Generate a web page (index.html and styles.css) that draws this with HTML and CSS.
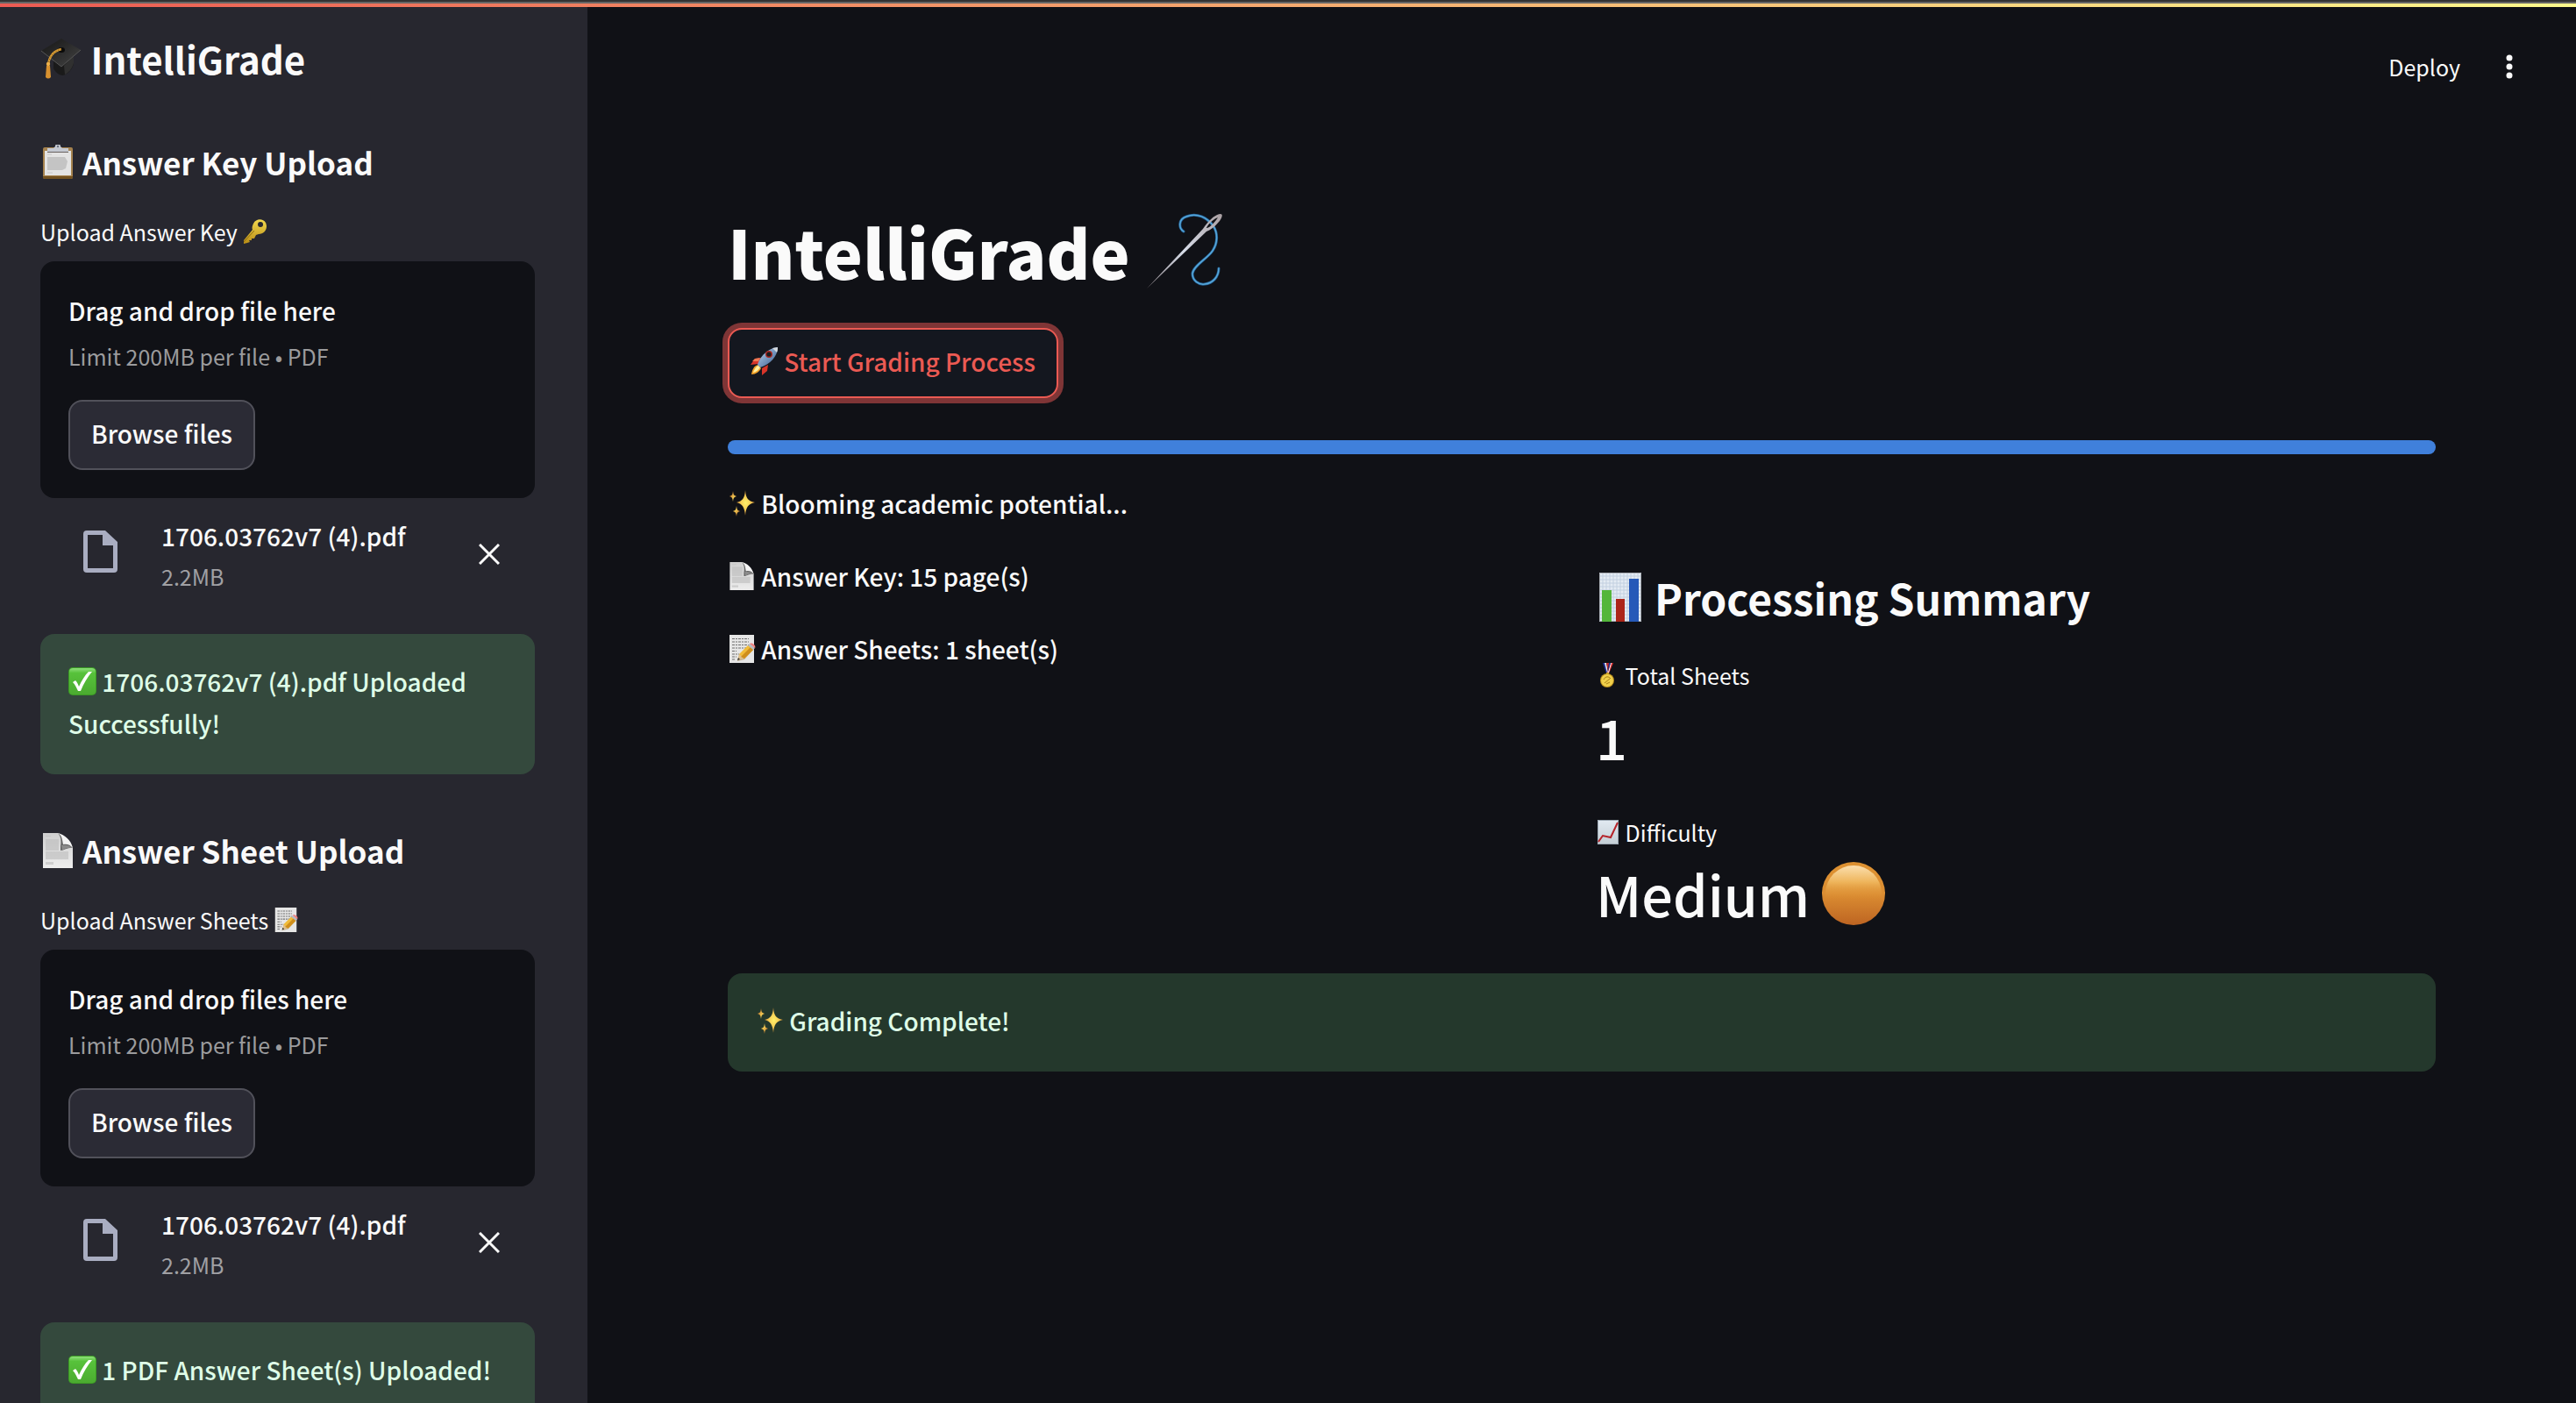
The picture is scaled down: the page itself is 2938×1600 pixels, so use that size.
FILE: index.html
```html
<!DOCTYPE html>
<html lang="en">
<head>
<meta charset="utf-8">
<meta name="viewport" content="width=device-width, initial-scale=1">
<title>IntelliGrade</title>
<link rel="stylesheet" href="styles.css">
</head>
<body>
<svg class="sprite" aria-hidden="true">
  <defs>
    <linearGradient id="g-orange" x1="0" y1="0" x2="0" y2="1"><stop offset="0" stop-color="#dd9131"/><stop offset=".5" stop-color="#dc8e32"/><stop offset="1" stop-color="#bd6422"/></linearGradient>
    <linearGradient id="g-shine" x1="0" y1="0" x2="0" y2="1"><stop offset="0" stop-color="#fbdfae"/><stop offset=".3" stop-color="#eeb45a"/><stop offset=".6" stop-color="#dc8e32" stop-opacity="0"/></linearGradient>
    <linearGradient id="g-paper" x1="0" y1="0" x2="0" y2="1"><stop offset="0" stop-color="#cfcfcf"/><stop offset="1" stop-color="#ededed"/></linearGradient>
    <linearGradient id="g-chart" x1="0" y1="0" x2="0" y2="1"><stop offset="0" stop-color="#e2eaf2"/><stop offset="1" stop-color="#c3ced4"/></linearGradient>
    <linearGradient id="g-check" x1="0" y1="0" x2="0" y2="1"><stop offset="0" stop-color="#8fe07c"/><stop offset=".18" stop-color="#57c23b"/><stop offset="1" stop-color="#4bab30"/></linearGradient>
    <linearGradient id="g-key" x1="0" y1="0" x2="0" y2="1"><stop offset="0" stop-color="#f2d84e"/><stop offset="1" stop-color="#b98d16"/></linearGradient>
    <linearGradient id="g-cap" x1="0" y1="0" x2="1" y2="1"><stop offset="0" stop-color="#151515"/><stop offset="1" stop-color="#444"/></linearGradient>
    <linearGradient id="g-rocket" x1="0" y1="0" x2="1" y2="1"><stop offset="0" stop-color="#c7dcf2"/><stop offset=".5" stop-color="#7898c0"/><stop offset="1" stop-color="#3c5a8c"/></linearGradient>
    <linearGradient id="g-needle" x1="0" y1="1" x2="1" y2="0"><stop offset="0" stop-color="#8d8488"/><stop offset=".5" stop-color="#d6dce8"/><stop offset="1" stop-color="#a99fa2"/></linearGradient>
    <radialGradient id="g-star"><stop offset="0" stop-color="#fff06a"/><stop offset=".5" stop-color="#f7cf55"/><stop offset="1" stop-color="#c98936"/></radialGradient>
  </defs>

  <symbol id="e-cap" viewBox="0 0 48 48">
    <path d="M15 22v13c2 5 8 8 10 8s10-3 13-13V20z" fill="#1a1a1a"/>
    <path d="M27 32l11-12v9c-2 7-6 11-10 13z" fill="#303030"/>
    <path d="M1 15L24 1l22 13-22 19z" fill="url(#g-cap)"/>
    <path d="M1 15l23 18 22-19" fill="none" stroke="#555" stroke-width="1"/>
    <ellipse cx="24" cy="14" rx="4" ry="3" fill="#0a0a0a"/>
    <path d="M24 13C16 15 10 21 9 31" fill="none" stroke="#d79c34" stroke-width="2.4"/>
    <path d="M24 13C16 15 10 21 9 31" fill="none" stroke="#7d551a" stroke-width="1" stroke-dasharray="1 2"/>
    <path d="M7 32h4l1 13c-2 2-4 2-6 0z" fill="#d8912f"/><circle cx="9" cy="30" r="2.2" fill="#efb14a"/>
  </symbol>
  <symbol id="e-clip" viewBox="0 0 40 40">
    <rect x="3" y="3" width="34" height="36" rx="2" fill="#a5824e"/><path d="M3 36h34v1a2 2 0 0 1-2 2H5a2 2 0 0 1-2-2z" fill="#73511f"/>
    <path d="M5 7h30v28H5z" fill="#e3e3e3"/><path d="M8 14h20l3 5-2 8-4 2H8z" fill="#c4c4c4"/><path d="M8 11h5M8 32h6" stroke="#c8c8c8"/>
    <path d="M8 4h7l2-2a3 3 0 0 1 6 0l2 2h7v5H8z" fill="#c5c9d2"/><path d="M8 8h24v1H8z" fill="#696260"/><circle cx="20" cy="2" r="1.2" fill="#6a7182"/>
  </symbol>
  <symbol id="e-page" viewBox="0 0 40 40">
    <path d="M3 0h18l16 17v23H3z" fill="url(#g-paper)"/>
    <path d="M6 7h15v13H6zM6 21h26v9H6zM6 33h9v3H6zM6 3h6v1H6z" fill="#bdbdbd" opacity=".6"/>
    <path d="M20 0c4 4 4 11 3 15v5c3 0 10-4 14-3C35 10 28 2 20 0z" fill="#646464"/>
    <path d="M20 0c5 3 5 8 6 13 4-1 8 0 11 4C35 8 28 2 20 0z" fill="#f4f4f4"/>
    <path d="M24 14c5-1 9 0 13 3-4-1-9 0-12 3z" fill="#8b8b8b"/>
  </symbol>
  <symbol id="e-memo" viewBox="0 0 32 32">
    <path d="M2 0h28v32H2z" fill="#e6e6e6"/>
    <path d="M5 4.500h19M5 8h19M5 11.500h19M5 15h16M5 18.500h5M5 22h8M5 25h5M5 28h4" stroke="#6f6f6f" stroke-width="1.200" stroke-dasharray="3 1 2 1"/>
    <path d="M11 30l2-7L25 11l6 4-12 13z" fill="#8e6a2c" opacity=".45"/>
    <path d="M11 29l2-7 3 1 3 4z" fill="#dfc08b"/><path d="M11 29l1-3 2 2z" fill="#333"/>
    <path d="M13 22L23 12l6 5-10 10z" fill="#f1bc3a"/><path d="M15 25l11-11 3 3-10 10z" fill="#cf8e1c"/>
    <path d="M23 12l2-2 6 5-2 2z" fill="#b9bcc2"/><path d="M25 10c2-2 8 2 6 5z" fill="#ef8080"/>
  </symbol>
  <symbol id="e-key" viewBox="0 0 28 28">
    <path fill-rule="evenodd" d="M13 5c3-6 11-6 14-1 3 6-1 13-8 13l-3 1-2 4-3 0 0 2-3 0 1 2-3 1-4 1v-4L12 12c-1-2 0-5 1-7zM21 3a3 3 0 1 0 .1 6A3 3 0 0 0 21 3z" fill="url(#g-key)"/>
    <path d="M2 26L14 13" stroke="#8a6a10" stroke-width="1"/>
  </symbol>
  <symbol id="e-check" viewBox="0 0 32 32">
    <rect width="32" height="32" rx="5" fill="#3b9a24"/><rect x="1" y="1" width="30" height="30" rx="4" fill="url(#g-check)"/>
    <path d="M5 17l3-2c2 2 3 4 4 7C15 15 19 9 23 5l4 0C22 11 17 19 14 27h-3C9 23 8 20 5 17z" fill="#fff"/>
  </symbol>
  <symbol id="e-rocket" viewBox="0 0 32 32">
    <path d="M13 12L5 13l-5 7 9-1zM20 20l-1 7-6 5 0-8z" fill="#d8352a"/><path d="M11 12l-6 1-3 3 7 0z" fill="#ef7a55"/>
    <path d="M9 20c-5 1-7 5-8 11 5 0 9-3 11-7z" fill="#f4a32a"/><path d="M9 21c-3 1-5 5-6 8 4-1 6-3 8-6z" fill="#fff2a0"/>
    <path d="M8 20c2-8 11-19 23-20 0 10-9 20-20 23z" fill="url(#g-rocket)"/>
    <path d="M25 1l6-1c0 2 0 4-1 6z" fill="#d5d9df"/><circle cx="21" cy="8" r="4" fill="#aa2620"/><circle cx="21" cy="8" r="2.600" fill="#1b1b1f"/>
  </symbol>
  <symbol id="e-needle" viewBox="0 0 88 88">
    <path d="M44 22C38 18 38 8 47 5c12-5 24 1 31 11 5 8 5 19-1 28-6 9-22 17-23 26 0 8 7 13 14 12 9-1 16-8 16-18" fill="none" stroke="#26649a" stroke-width="3" stroke-linecap="round"/>
    <path d="M44 22C38 18 38 8 47 5c12-5 24 1 31 11 5 8 5 19-1 28-6 9-22 17-23 26 0 8 7 13 14 12 9-1 16-8 16-18" fill="none" stroke="#56a7d8" stroke-width="1.500" stroke-linecap="round"/>
    <path fill-rule="evenodd" d="M2 87L66 19C71 11 80 2 86 2c3 0 2 4-1 8-5 6-10 10-15 12zM70 18c4 0 10-7 13-12-5 2-11 7-13 12z" fill="url(#g-needle)"/>
  </symbol>
  <symbol id="e-spark" viewBox="0 0 32 32">
    <path d="M20 1c1 10 3 12 11 14-8 2-10 5-11 15-1-10-3-13-10-15 7-2 9-4 10-14z" fill="url(#g-star)"/>
    <path d="M6 2c.5 4 1 5 4 6-3 1-3.500 2-4 6-.5-4-1-5-4-6 3-1 3.500-2 4-6zM10 19c.5 4 1 5 4 6-3 1-3.500 2-4 6-.5-4-1-5-4-6 3-1 3.500-2 4-6z" fill="url(#g-star)"/>
  </symbol>
  <symbol id="e-bars" viewBox="0 0 56 56">
    <path d="M4 0h48v56H4z" fill="#e4ebf3"/>
    <path d="M4 4h48M4 8h48M4 12h48M4 16h48M4 20h48M4 24h48M4 28h48M4 32h48M4 36h48M4 40h48M4 44h48M4 48h48M4 52h48M8 0v56M12 0v56M16 0v56M20 0v56M24 0v56M28 0v56M32 0v56M36 0v56M40 0v56M44 0v56M48 0v56" stroke="#c2d0e0" stroke-width="1" fill="none"/>
    <path d="M4.500.5h47v55h-47z" fill="none" stroke="#a8adb4"/>
    <path d="M7 20h11v36H7z" fill="#54b63b"/><path d="M23 30h10v26H23z" fill="#ac2519"/><path d="M38 7h11v49H38z" fill="#2659b8"/>
  </symbol>
  <symbol id="e-medal" viewBox="0 0 28 28">
    <path d="M8 0h2l4 12h-2z" fill="#1d2f9a"/><path d="M10 0h2l2 11h-1z" fill="#e9e9ef"/><path d="M12 0h3l-1 9z" fill="#c92b2b"/><path d="M20 0h-3l-4 12h2z" fill="#d33"/><path d="M17 0h1l-3 11h-1z" fill="#fff"/><path d="M15 0h2l-3 10z" fill="#1d2f9a"/>
    <circle cx="13" cy="20" r="8" fill="#b88d1d"/><circle cx="13" cy="20" r="7" fill="#f0cf4a"/><path d="M9 19c2-4 6-4 8-1M10 23l6-5M12 24l4-2" fill="none" stroke="#a77f16"/><path d="M12 11h3v2h-3z" fill="#c9a22c"/>
  </symbol>
  <symbol id="e-trend" viewBox="0 0 28 28">
    <path d="M2 0h24v28H2z" fill="url(#g-chart)"/><path d="M2.500.5h23v27h-23z" fill="none" stroke="#9ba7b2"/>
    <path d="M3 25l5-7 9 2 8-17" fill="none" stroke="#b5242a" stroke-width="2"/>
  </symbol>
  <symbol id="e-orange" viewBox="0 0 72 72">
    <circle cx="36" cy="36" r="36" fill="url(#g-orange)"/><ellipse cx="36" cy="36" rx="32" ry="32" fill="url(#g-shine)"/>
  </symbol>
  <symbol id="i-file" viewBox="0 0 39 48">
    <path fill-rule="evenodd" d="M4 0h21l14 13v31a4 4 0 0 1-4 4H4a4 4 0 0 1-4-4V4a4 4 0 0 1 4-4zM5 5v38h29V17H22V5z" fill="currentColor"/>
  </symbol>
  <symbol id="i-close" viewBox="0 0 24 24"><path d="M1 1l22 22M23 1L1 23" stroke="currentColor" stroke-width="3" fill="none"/></symbol>
</svg>

<div class="decoration"></div>
<div class="app">
  <aside class="sidebar">
    <h1 class="side-title"><svg class="emoji e48" role="img" aria-label="graduation cap"><use href="#e-cap"/></svg> IntelliGrade</h1>

    <section class="upload">
      <h2 class="side-heading"><svg class="emoji e40" role="img" aria-label="clipboard"><use href="#e-clip"/></svg> Answer Key Upload</h2>
      <label class="field-label" for="key-browse">Upload Answer Key <svg class="emoji e28" role="img" aria-label="key"><use href="#e-key"/></svg></label>
      <div class="dropzone">
        <div class="drop-text">Drag and drop file here</div>
        <div class="drop-limit">Limit 200MB per file • PDF</div>
        <button class="button" id="key-browse" type="button">Browse files</button>
      </div>
      <div class="file">
        <svg class="file-icon" aria-hidden="true"><use href="#i-file"/></svg>
        <div class="file-info">
          <div class="file-name">1706.03762v7 (4).pdf</div>
          <div class="file-size">2.2MB</div>
        </div>
        <button class="file-remove" type="button" aria-label="Remove file"><svg class="close-icon" aria-hidden="true"><use href="#i-close"/></svg></button>
      </div>
      <div class="alert alert-side"><svg class="emoji e32" role="img" aria-label="done"><use href="#e-check"/></svg> 1706.03762v7 (4).pdf Uploaded Successfully!</div>
    </section>

    <section class="upload">
      <h2 class="side-heading"><svg class="emoji e40" role="img" aria-label="page"><use href="#e-page"/></svg> Answer Sheet Upload</h2>
      <label class="field-label" for="sheet-browse">Upload Answer Sheets <svg class="emoji e28" role="img" aria-label="memo"><use href="#e-memo"/></svg></label>
      <div class="dropzone">
        <div class="drop-text">Drag and drop files here</div>
        <div class="drop-limit">Limit 200MB per file • PDF</div>
        <button class="button" id="sheet-browse" type="button">Browse files</button>
      </div>
      <div class="file">
        <svg class="file-icon" aria-hidden="true"><use href="#i-file"/></svg>
        <div class="file-info">
          <div class="file-name">1706.03762v7 (4).pdf</div>
          <div class="file-size">2.2MB</div>
        </div>
        <button class="file-remove" type="button" aria-label="Remove file"><svg class="close-icon" aria-hidden="true"><use href="#i-close"/></svg></button>
      </div>
      <div class="alert alert-side"><svg class="emoji e32" role="img" aria-label="done"><use href="#e-check"/></svg> 1 PDF Answer Sheet(s) Uploaded!</div>
    </section>
  </aside>

  <div class="page">
    <header class="toolbar">
      <button class="deploy" type="button">Deploy</button>
      <button class="menu" type="button" aria-label="Main menu"><svg class="menu-icon" viewBox="0 0 40 40" aria-hidden="true"><circle cx="20" cy="10" r="3.500"/><circle cx="20" cy="20" r="3.500"/><circle cx="20" cy="30" r="3.500"/></svg></button>
    </header>
    <main class="content">
      <h1 class="title">IntelliGrade <svg class="emoji e88" role="img" aria-label="needle and thread"><use href="#e-needle"/></svg></h1>
      <button class="button button-start" type="button"><svg class="emoji e32" role="img" aria-label="rocket"><use href="#e-rocket"/></svg> Start Grading Process</button>
      <progress class="progress" value="100" max="100" aria-label="Grading progress"></progress>
      <p class="text"><svg class="emoji e32" role="img" aria-label="sparkles"><use href="#e-spark"/></svg> Blooming academic potential...</p>
      <div class="columns">
        <div class="facts">
          <p class="text"><svg class="emoji e32" role="img" aria-label="page"><use href="#e-page"/></svg> Answer Key: 15 page(s)</p>
          <p class="text"><svg class="emoji e32" role="img" aria-label="memo"><use href="#e-memo"/></svg> Answer Sheets: 1 sheet(s)</p>
        </div>
        <section class="summary">
          <h3 class="summary-title"><svg class="emoji e56" role="img" aria-label="bar chart"><use href="#e-bars"/></svg> Processing Summary</h3>
          <div class="metric">
            <div class="metric-label"><svg class="emoji e28" role="img" aria-label="medal"><use href="#e-medal"/></svg> Total Sheets</div>
            <div class="metric-value">1</div>
          </div>
          <div class="metric">
            <div class="metric-label"><svg class="emoji e28" role="img" aria-label="rising chart"><use href="#e-trend"/></svg> Difficulty</div>
            <div class="metric-value">Medium <svg class="emoji e72" role="img" aria-label="orange circle"><use href="#e-orange"/></svg></div>
          </div>
        </section>
      </div>
      <div class="alert alert-main"><svg class="emoji e32" role="img" aria-label="sparkles"><use href="#e-spark"/></svg> Grading Complete!</div>
    </main>
  </div>
</div>
</body>
</html>
```
FILE: styles.css
```css
* { box-sizing: border-box; }

body {
  margin: 0;
  height: 100vh;
  overflow: hidden;
  display: flex;
  flex-direction: column;
  background: #101116;
  color: #fafafa;
  font-family: "Noto Sans CJK JP", "Noto Sans", sans-serif;
  font-size: 28px;
  font-weight: 500;
  line-height: 48px;
}

h1, h2, h3, p { margin: 0; }

button {
  font: inherit;
  color: inherit;
  background: none;
  border: 0;
  padding: 0;
  cursor: pointer;
}

.sprite { position: absolute; width: 0; height: 0; }

/* Emoji drawings, sized to the text beside them */
.emoji { overflow: visible; }
.e28 { width: 28px; height: 28px; vertical-align: -3px; }
.e32 { width: 32px; height: 32px; vertical-align: -4px; }
.e40 { width: 40px; height: 40px; vertical-align: -5px; }
.e48 { width: 48px; height: 48px; vertical-align: -6px; }
.e56 { width: 56px; height: 56px; vertical-align: -7px; }
.e72 { width: 72px; height: 72px; vertical-align: -9px; }
.e88 { width: 88px; height: 88px; vertical-align: -11px; }

.decoration {
  flex: none;
  height: 8px;
  border-top: 2px solid #333;
  background: linear-gradient(#666, #666) top / 100% 2px no-repeat,
    linear-gradient(90deg, #ec5b53, #fdf98c);
}

.app {
  flex: 1;
  min-height: 0;
  display: grid;
  grid-template-columns: 670px 1fr;
}

/* Sidebar */
.sidebar {
  background: #27272f;
  padding: 30px 60px 0 46px;
  overflow: hidden;
}

.side-title {
  font-size: 42px;
  line-height: 58px;
  margin-bottom: 65px;
}

.upload { margin-bottom: 63px; }

.side-heading {
  font-size: 35px;
  line-height: 48px;
  margin-bottom: 33px;
}

.field-label {
  display: block;
  font-size: 25px;
  font-weight: 400;
  line-height: 44px;
  margin-bottom: 12px;
}

.dropzone {
  background: #101116;
  border-radius: 16px;
  padding: 32px;
}

.drop-limit {
  margin: 8px 0 30px;
  font-size: 25px;
  font-weight: 400;
  line-height: 40px;
  color: #9b9b9d;
}

.button {
  display: block;
  height: 80px;
  padding: 0 24px 4px;
  border: 2px solid #51515a;
  border-radius: 16px;
  background: #2b2b35;
}

.file {
  display: flex;
  align-items: center;
  padding: 19px 40px 46px 49px;
}

.file-icon {
  width: 39px;
  height: 48px;
  margin: 0 50px 6px 0;
  color: #a9adc1;
}

.file-info { flex: 1; }

.file-size {
  margin-top: 2px;
  font-size: 25px;
  font-weight: 400;
  line-height: 40px;
  color: #a0a0a4;
}

.file-remove { display: flex; }
.close-icon { width: 24px; height: 24px; }

.alert {
  padding: 30px 32px 34px;
  border-radius: 16px;
  color: #dffde8;
}

.alert-side { background: #34493d; }
.alert-main { background: #24382c; margin-top: 36px; }

/* Main page */
.toolbar {
  height: 136px;
  display: flex;
  align-items: center;
  justify-content: flex-end;
  gap: 36px;
  padding-right: 56px;
}

.deploy { font-size: 25px; font-weight: 400; line-height: 40px; }
.menu { display: flex; }
.menu-icon { width: 40px; height: 40px; fill: #fafafa; }

.content { padding: 89px 160px 0; }

.title {
  font-size: 76px;
  font-weight: 900;
  line-height: 106px;
  margin-bottom: 35px;
}

.button-start {
  border-color: #eb5a53;
  background: #14171f;
  color: #eb5a53;
  box-shadow: 0 0 0 6px #7f3536;
}

.progress {
  appearance: none;
  display: block;
  width: 100%;
  height: 16px;
  margin: 48px 0 32px;
  border: 0;
  border-radius: 8px;
  overflow: hidden;
  background: #262730;
}

.progress::-webkit-progress-bar { background: #262730; }
.progress::-webkit-progress-value { background: #4080db; }

.columns {
  display: grid;
  grid-template-columns: 1fr 1fr;
  gap: 32px;
  margin-top: 35px;
}

.facts {
  display: flex;
  flex-direction: column;
  gap: 35px;
}

.summary-title {
  padding: 14px 0 33px;
  font-size: 48px;
  line-height: 68px;
}

.metric + .metric { margin-top: 32px; }

.metric-label {
  font-size: 25px;
  font-weight: 400;
  line-height: 45px;
}

.metric-value {
  padding-bottom: 8px;
  font-size: 63px;
  line-height: 94px;
}
```
